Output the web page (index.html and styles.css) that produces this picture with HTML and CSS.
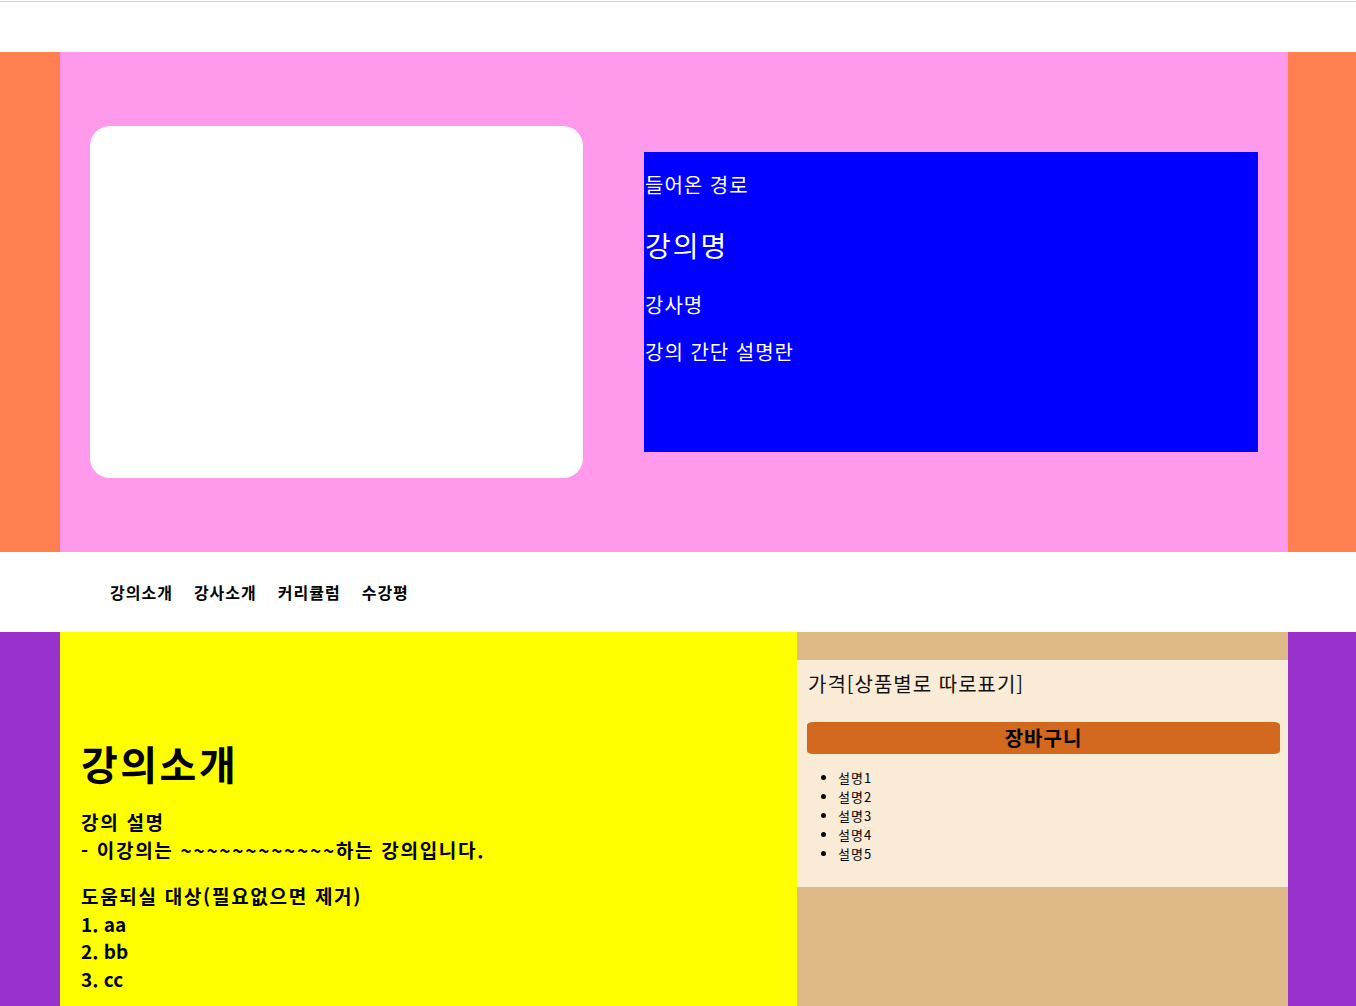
FILE: index.html
```html
<!DOCTYPE html>
<html lang="ko">
<head>
<meta charset="utf-8">
<title>강의 상세</title>
<link rel="stylesheet" href="styles.css">
</head>
<body>
<header class="topbar"><div class="topbar-line"></div></header>

<section class="hero">
  <div class="side side-left"></div>
  <div class="hero-inner">
    <div class="thumb"></div>
    <div class="info">
      <p class="route">들어온 경로</p>
      <h2 class="title">강의명</h2>
      <p class="teacher">강사명</p>
      <p class="desc">강의 간단 설명란</p>
    </div>
  </div>
  <div class="side side-right"></div>
</section>

<nav class="tabs">
  <a class="tab">강의소개</a>
  <a class="tab">강사소개</a>
  <a class="tab">커리큘럼</a>
  <a class="tab">수강평</a>
</nav>

<section class="main">
  <div class="mside mside-left"></div>
  <div class="content">
    <h1 class="content-title">강의소개</h1>
    <p class="block">강의 설명<br>- 이강의는 ~~~~~~~~~~~~하는 강의입니다.</p>
    <p class="block list">도움되실 대상(필요없으면 제거)<br><span class="latin">1. aa</span><br><span class="latin">2. bb</span><br><span class="latin">3. cc</span></p>
  </div>
  <aside class="sidebar">
    <div class="card">
      <p class="price">가격[상품별로 따로표기]</p>
      <button class="cart">장바구니</button>
      <ul class="features">
        <li>설명1</li>
        <li>설명2</li>
        <li>설명3</li>
        <li>설명4</li>
        <li>설명5</li>
      </ul>
    </div>
  </aside>
  <div class="mside mside-right"></div>
</section>
</body>
</html>
```

FILE: styles.css
```css
* { box-sizing: border-box; }
html, body { margin: 0; padding: 0; }
body {
  font-family: "Noto Sans CJK KR", "Noto Sans", sans-serif;
  color: #000;
  background: #fff;
}

.topbar { height: 52px; padding-top: 1px; }
.topbar-line { border-top: 1px solid #cfcfcf; }

.hero { display: flex; height: 500px; }
.side-left { width: 60px; background: #ff7f50; }
.side-right { width: 68px; background: #ff7f50; }
.hero-inner {
  width: 1228px;
  background: #ff99ec;
  display: flex;
  align-items: center;
  padding: 0 30px;
  gap: 61px;
}
.thumb {
  width: 493px;
  height: 352px;
  background: #fff;
  border-radius: 20px;
}
.info {
  width: 614px;
  height: 300px;
  background: #0000ff;
  color: #fff;
  overflow: hidden;
  padding-left: 1px;
}
.info p { font-size: 20px; line-height: 28px; letter-spacing: 1px; }
.route { margin: 19px 0 0; }
.title { margin: 26px 0; font-size: 28px; line-height: 40px; font-weight: normal; letter-spacing: 2px; }
.teacher { margin: 26px 0 19px; }
.desc { margin: 19px 0 0; }

.tabs {
  height: 80px;
  display: flex;
  align-items: center;
  padding-left: 110px;
  gap: 21px;
}
.tab { font-size: 16px; font-weight: bold; color: #000; line-height: 20px; letter-spacing: 1px; }

.main { display: flex; min-height: 420px; }
.mside-left { width: 60px; background: #9932cc; }
.mside-right { width: 68px; background: #9932cc; }
.content {
  width: 737px;
  background: #ffff00;
  padding: 0 21px;
}
.content-title {
  margin: 101px 0 15px;
  font-size: 40px;
  line-height: 60px;
  font-weight: bold;
  letter-spacing: 2.5px;
}
.block {
  margin: 0;
  font-size: 19px;
  font-weight: bold;
  line-height: 28px;
  letter-spacing: 1.7px;
}
.block.list { margin-top: 18px; line-height: 27.5px; }
.latin { letter-spacing: 0; }

.sidebar {
  width: 491px;
  background: #deb887;
  padding-top: 28px;
}
.card {
  background: #faebd7;
  padding: 10px 0 24.5px;
}
.price {
  margin: 0 0 24px;
  padding-left: 11px;
  font-size: 20px;
  line-height: 28px;
  color: #111;
  letter-spacing: 1px;
}
.cart {
  display: block;
  width: 473px;
  height: 32px;
  margin: 0 8px 0 10px;
  border: none;
  border-radius: 6px / 3px;
  background: #d2691e;
  color: #000;
  font-family: inherit;
  font-size: 20px;
  font-weight: bold;
  line-height: 32px;
  letter-spacing: 1px;
  padding: 0;
}
.features {
  margin: 13.5px 0 0;
  padding-left: 41px;
  font-size: 13px;
  line-height: 19px;
  letter-spacing: 1px;
}
```
